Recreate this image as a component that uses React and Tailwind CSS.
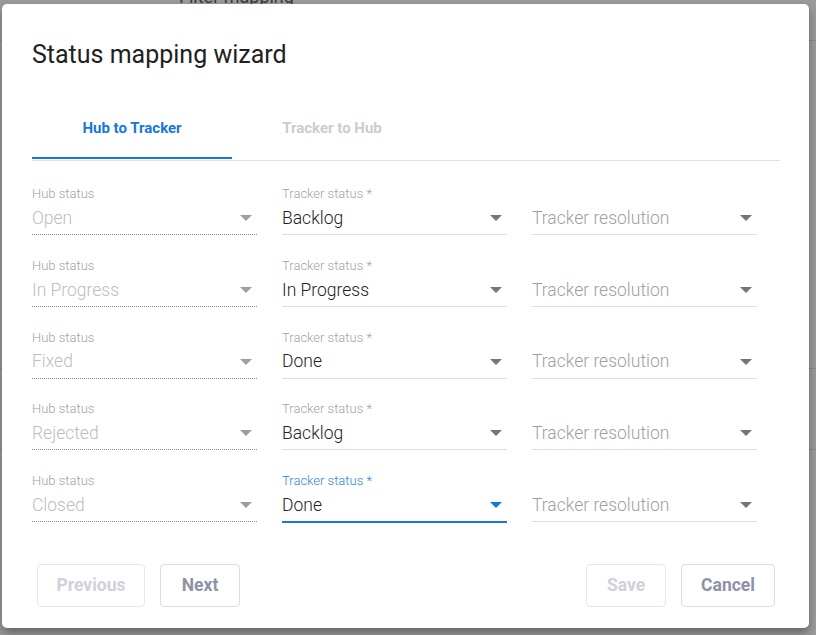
const rows = [
  { hub: "Open", tracker: "Backlog" },
  { hub: "In Progress", tracker: "In Progress" },
  { hub: "Fixed", tracker: "Done" },
  { hub: "Rejected", tracker: "Backlog" },
  { hub: "Closed", tracker: "Done", focused: true },
];

function Caret({ color }) {
  return (
    <svg width="12" height="6" viewBox="0 0 12 6" className="shrink-0">
      <polygon points="0,0 12,0 6,6" fill={color} />
    </svg>
  );
}

function Field({ label, value, kind }) {
  const labelColor = kind === "focused" ? "text-[#2b86e3]" : "text-[#a3a3a3]";
  const valueColor =
    kind === "disabled" ? "text-[#bdbdbd]" : kind === "placeholder" ? "text-[#9e9e9e]" : "text-[#222222]";
  const line =
    kind === "disabled"
      ? "h-[33px] border-b border-dotted border-[#8a8a8a]"
      : kind === "focused"
      ? "h-[34px] border-b-2 border-[#1677e0]"
      : "h-[33px] border-b border-[#dedede]";
  const caret = kind === "focused" ? "#1677e0" : kind === "disabled" ? "#9e9e9e" : "#757575";

  return (
    <div className="flex flex-col w-[225px]">
      <div className={`h-[16px] leading-[16px] text-[13px] font-light ${labelColor}`}>{label}</div>
      <div className={`flex items-center justify-between pr-[5px] ${line}`}>
        <span className={`text-[17.5px] font-light ${valueColor}`}>{value}</span>
        <Caret color={caret} />
      </div>
    </div>
  );
}

export default function App() {
  return (
    <div
      className="relative h-[635px] w-full overflow-hidden bg-[#9b9b9b] pt-[4px] pl-[2px]"
      style={{ fontFamily: "Roboto, 'Noto Sans', sans-serif" }}
    >
      {/* page underneath the overlay */}
      <div className="absolute left-[179px] top-[-12px] text-[18px] leading-[18px] text-[#3c3c3c]">Filter mapping</div>
      <div className="absolute left-0 right-0 top-[40px] h-px bg-[#8a8a8a]" />
      <div className="absolute left-0 right-0 top-[368px] h-px bg-[#888888]" />
      <div className="absolute left-0 right-0 top-[449px] h-px bg-[#888888]" />

      <div className="relative flex flex-col w-[807px] h-[624px] bg-white rounded-[5px] shadow-[0_5px_10px_rgba(0,0,0,0.35)] pt-[35px]">
        <h1 className="px-[30px] text-[25px] leading-[32px] font-normal text-[#212121]">Status mapping wizard</h1>

        <div className="mx-[30px] mt-[27px] flex border-b border-[#e0e0e0] w-[748px]">
          <div className="flex flex-col w-[200px]">
            <div className="h-[59px] pt-[2px] flex items-center justify-center text-[15px] font-bold text-[#1677e0]">
              Hub to Tracker
            </div>
            <div className="h-[2px] bg-[#1677e0]" />
            <div className="h-px" />
          </div>
          <div className="flex flex-col w-[200px]">
            <div className="h-[59px] pt-[2px] flex items-center justify-center text-[15px] font-bold text-[#cccccc]">
              Tracker to Hub
            </div>
          </div>
        </div>

        <div className="mx-[30px] mt-[25px] grid grid-cols-[225px_225px_225px] gap-x-[25px] gap-y-[22.75px]">
          {rows.map((r, i) => (
            <div key={i} className="contents">
              <Field label="Hub status" value={r.hub} kind="disabled" />
              <Field label="Tracker status *" value={r.tracker} kind={r.focused ? "focused" : "normal"} />
              <Field label="" value="Tracker resolution" kind="placeholder" />
            </div>
          ))}
        </div>

        <div className="mt-[41px] pl-[35px] pr-[34px] flex items-center justify-between">
          <div className="flex gap-[15px]">
            <button className="h-[43px] w-[108px] rounded-[4px] border border-[#e6e6ec] text-[17.5px] font-bold text-[#d0d1dc]">
              Previous
            </button>
            <button className="h-[43px] w-[80px] rounded-[4px] border border-[#dcdce4] text-[17.5px] font-bold text-[#8f91a7]">
              Next
            </button>
          </div>
          <div className="flex gap-[15px]">
            <button className="h-[43px] w-[80px] rounded-[4px] border border-[#e6e6ec] text-[17.5px] font-bold text-[#d0d1dc]">
              Save
            </button>
            <button className="h-[43px] w-[94px] rounded-[4px] border border-[#dcdce4] text-[17.5px] font-bold text-[#8f91a7]">
              Cancel
            </button>
          </div>
        </div>
      </div>
    </div>
  );
}
